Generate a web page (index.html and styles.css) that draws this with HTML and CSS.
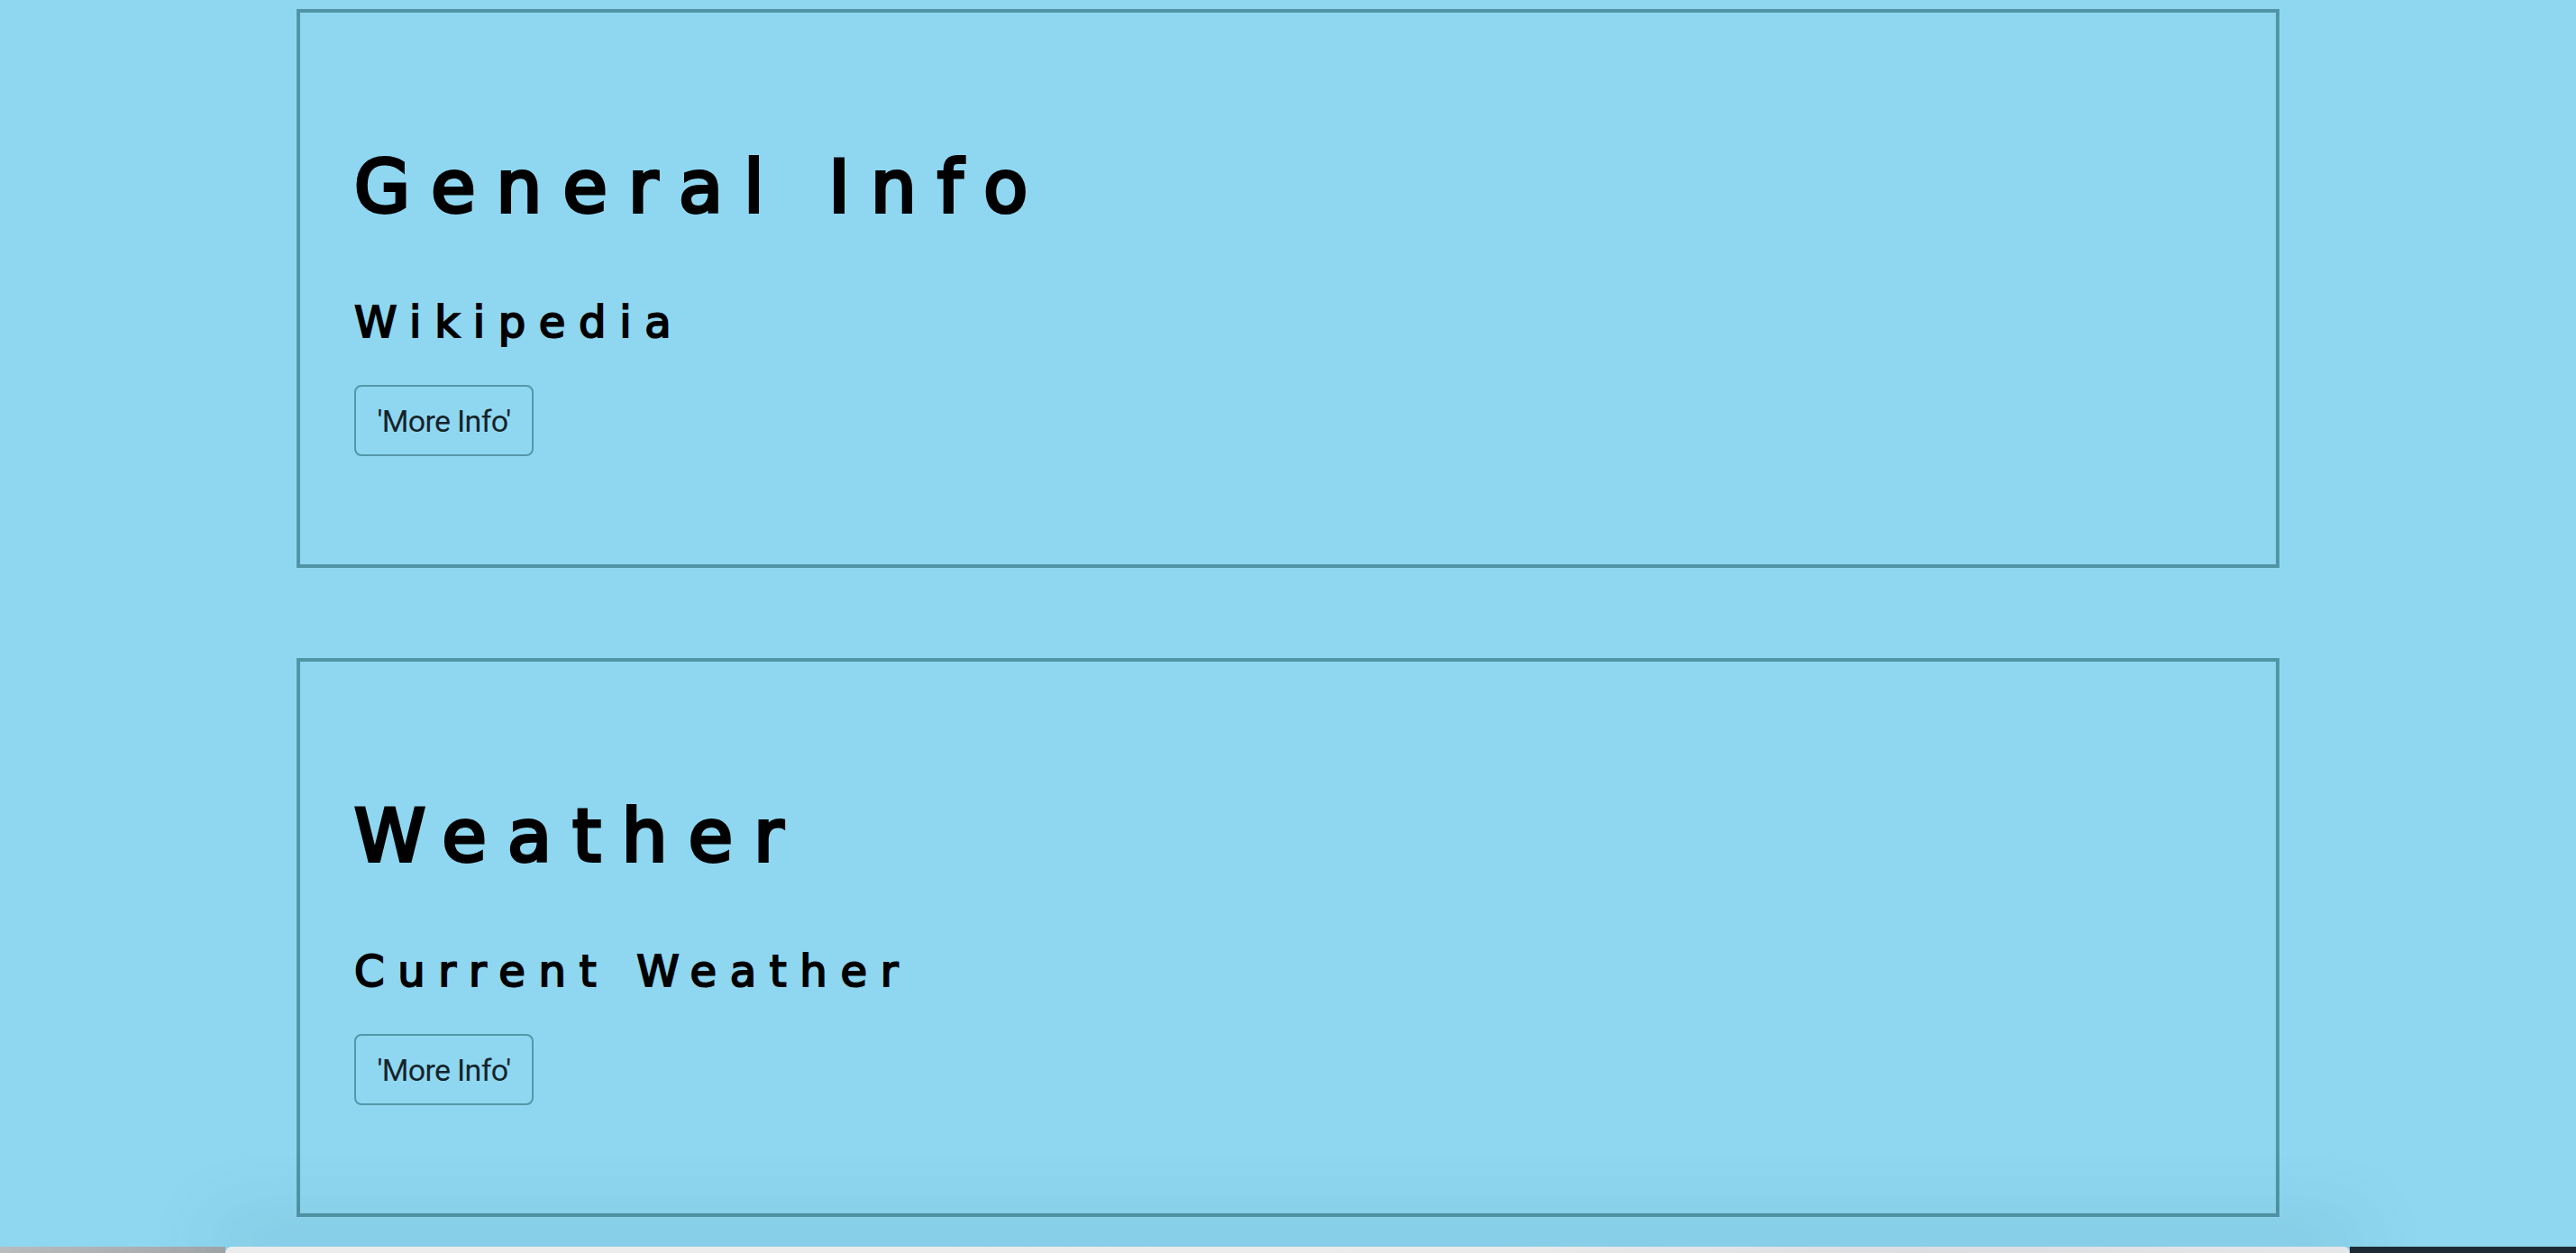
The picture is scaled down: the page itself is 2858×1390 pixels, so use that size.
FILE: index.html
```html
<!DOCTYPE html>
<html lang="en">
<head>
<meta charset="utf-8">
<title>Info</title>
<link rel="stylesheet" href="styles.css">
</head>
<body>
<main class="page">
  <section class="card">
    <h2 class="card-title">General Info</h2>
    <h3 class="card-sub">Wikipedia</h3>
    <button class="more" type="button">'More Info'</button>
  </section>
  <section class="card">
    <h2 class="card-title">Weather</h2>
    <h3 class="card-sub">Current Weather</h3>
    <button class="more" type="button">'More Info'</button>
  </section>
</main>
<div class="desktop">
  <div class="desk-left"></div>
  <div class="window-edge"></div>
  <div class="desk-right"></div>
</div>
</body>
</html>
```
FILE: styles.css
```css
html, body {
  margin: 0;
  padding: 0;
  background: #8fd7f0;
  height: 100%;
  overflow: hidden;
}

.page {
  display: flex;
  flex-direction: column;
  align-items: center;
  gap: 100px;
  padding-top: 10px;
}

.card {
  box-sizing: border-box;
  width: 2200px;
  border: 4px solid #5095a6;
  padding: 146px 60px 120px 60px;
  display: flex;
  flex-direction: column;
  align-items: flex-start;
  color: #000;
}

.card-title {
  margin: 0;
  font-family: "DejaVu Sans", Inter, sans-serif;
  font-weight: 400;
  font-size: 80px;
  line-height: 96px;
  letter-spacing: 23.2px;
  -webkit-text-stroke: 4px #000;
}

.card-sub {
  margin: 72px 0 0 0;
  font-family: "DejaVu Sans", Inter, sans-serif;
  font-weight: 400;
  font-size: 48px;
  line-height: 58px;
  letter-spacing: 14.7px;
  -webkit-text-stroke: 2px #000;
}

.more {
  margin-top: 41px;
  box-sizing: border-box;
  width: 199px;
  height: 79px;
  padding: 0;
  background: transparent;
  border: 2px solid #5397a9;
  border-radius: 8px;
  font-family: Roboto, "Liberation Sans", sans-serif;
  font-size: 34px;
  letter-spacing: -0.7px;
  color: #14232a;
}

.desktop {
  position: fixed;
  left: 0;
  right: 0;
  bottom: 0;
  height: 7px;
  display: flex;
}

.desk-left {
  width: 250px;
  background: linear-gradient(90deg, #b9bcbd, #a3a6a8);
}

.window-edge {
  flex: 1;
  background: linear-gradient(90deg, #ececec 0%, #ebebeb 60%, #dcdde0 80%, #e6e7e8 100%);
  border-top-left-radius: 12px;
  border-top-right-radius: 12px;
  box-shadow: 0 -10px 80px 14px rgba(40, 90, 120, 0.2);
}

.desk-right {
  width: 251px;
  background: #1d2a36;
}
```
